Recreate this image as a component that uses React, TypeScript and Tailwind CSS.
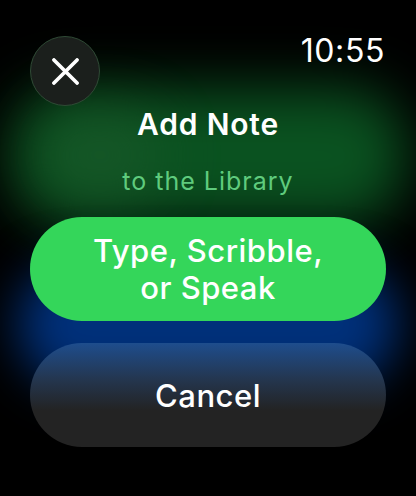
import React from "react";

export default function App() {
  return (
    <div className="relative w-[416px] h-[496px] overflow-hidden bg-black font-['Inter',sans-serif] text-white">
      {/* background glows */}
      <div className="absolute left-[10px] right-[10px] top-[88px] h-[136px] rounded-[60px] bg-[#0a5220] blur-[28px]" />
      <div className="absolute left-[40px] top-[110px] w-[120px] h-[90px] rounded-full bg-[#1e5a2c] blur-[30px] opacity-60" />
      <div className="absolute left-[18px] right-[18px] top-[262px] h-[124px] rounded-[60px] bg-[#00307a] blur-[24px]" />

      <div className="relative flex flex-col px-[30px]">
        {/* header */}
        <div className="flex justify-between items-start pt-[36px]">
          <button className="flex items-center justify-center w-[70px] h-[70px] rounded-full bg-[#1b1f1c] border border-[#2f4a35]">
            <svg width="27" height="27" viewBox="0 0 28 28" fill="none" stroke="white" strokeWidth="3.8" strokeLinecap="round">
              <path d="M2 2L26 26M26 2L2 26" />
            </svg>
          </button>
          <span className="mt-[-3px] mr-[1px] text-[32px] leading-[36px] tracking-[0.6px]">10:55</span>
        </div>

        {/* title */}
        <h1 className="text-center text-[30px] leading-[36px] font-semibold tracking-[0.8px]">Add Note</h1>
        <p className="mt-[24px] text-center text-[25px] leading-[30px] tracking-[1px] text-[#5fcb7d]">to the Library</p>

        {/* actions */}
        <button className="mt-[21px] h-[104px] rounded-full bg-[#34d65a] text-[31px] leading-[37px] font-medium tracking-[0.5px] text-white">
          Type, Scribble,
          <br />
          or Speak
        </button>
        <button className="mt-[22px] h-[104px] rounded-full bg-[linear-gradient(to_bottom,#1e4d8d_0%,#24364f_35%,#232323_65%,#232323_100%)] text-[31px] leading-[37px] font-medium tracking-[0.5px] text-white">
          Cancel
        </button>
      </div>
    </div>
  );
}
